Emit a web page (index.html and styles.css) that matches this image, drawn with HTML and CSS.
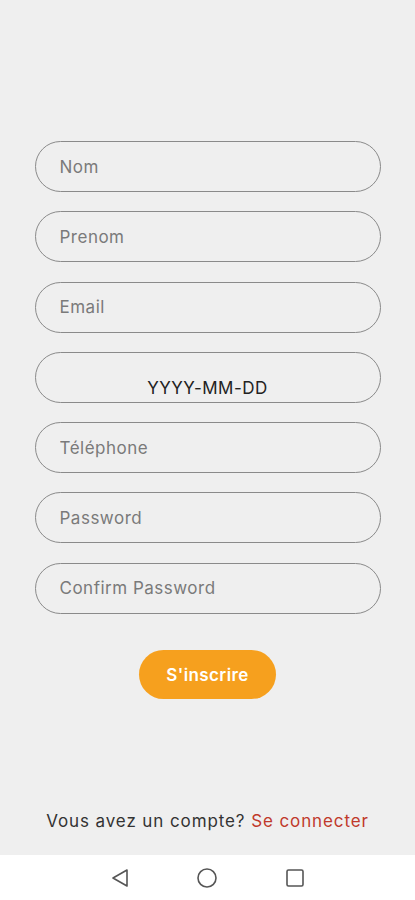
FILE: index.html
```html
<!DOCTYPE html>
<html>
<head>
    <meta charset="utf-8">
    <title>Inscription</title>
    <meta name="viewport" content="width=device-width, initial-scale=1">
    <link rel="stylesheet" href="styles.css">
</head>
<body>
    <div class="screen">
        <form class="signup-form">
            <input class="field" type="text" placeholder="Nom">
            <input class="field" type="text" placeholder="Prenom">
            <input class="field" type="email" placeholder="Email">
            <div class="field date-field">YYYY-MM-DD</div>
            <input class="field" type="tel" placeholder="Téléphone">
            <input class="field" type="password" placeholder="Password">
            <input class="field" type="password" placeholder="Confirm Password">

            <button class="submit-btn" type="button">S'inscrire</button>
        </form>

        <p class="login-line">Vous avez un compte? <a href="#">Se connecter</a></p>
    </div>

    <!-- android navigation bar -->
    <div class="nav-bar">
        <svg width="18" height="20" viewBox="0 0 18 20">
            <path d="M16 2 L2 10 L16 18 Z" fill="none" stroke="#555" stroke-width="1.6" stroke-linejoin="round"/>
        </svg>
        <svg width="22" height="22" viewBox="0 0 22 22">
            <circle cx="11" cy="11" r="9" fill="none" stroke="#555" stroke-width="1.6"/>
        </svg>
        <svg width="20" height="20" viewBox="0 0 20 20">
            <rect x="2" y="2" width="16" height="16" rx="1.5" fill="none" stroke="#555" stroke-width="1.6"/>
        </svg>
    </div>
</body>
</html>
```

FILE: styles.css
```css
body {
    margin: 0;
    background-color: #efefef;
    font-family: "Inter", "Open Sans", sans-serif;
}

.screen {
    height: 855px;
    display: flex;
    flex-direction: column;
    align-items: center;
}

/* form with the pill shaped fields */
.signup-form {
    width: 346px;
    margin-top: 141px;
    display: flex;
    flex-direction: column;
    gap: 19.3px;
}

.field {
    box-sizing: border-box;
    height: 51px;
    width: 100%;
    margin: 0;
    padding: 0 24px;
    border: 1px solid #8a8a8a;
    border-radius: 26px;
    background-color: transparent;
    font-family: inherit;
    font-size: 17px;
    letter-spacing: 0.5px;
    color: #333;
    outline: none;
}

.field::placeholder {
    color: #7a7a7a;
}

.date-field {
    display: flex;
    align-items: flex-end;
    justify-content: center;
    padding-bottom: 4px;
    color: #222;
}

.submit-btn {
    align-self: center;
    width: 137px;
    height: 49px;
    margin-top: 17px;
    border: none;
    border-radius: 25px;
    background-color: #f6a01e;
    color: #fff;
    font-family: inherit;
    font-size: 17px;
    font-weight: 600;
    letter-spacing: 0.4px;
    cursor: pointer;
}

.login-line {
    margin: auto 0 24px 0;
    font-size: 17px;
    letter-spacing: 0.9px;
    color: #333;
}

.login-line a {
    color: #c0392b;
    text-decoration: none;
}

.nav-bar {
    height: 45px;
    background-color: #fff;
    display: flex;
    align-items: center;
    justify-content: center;
    gap: 67px;
}
```
